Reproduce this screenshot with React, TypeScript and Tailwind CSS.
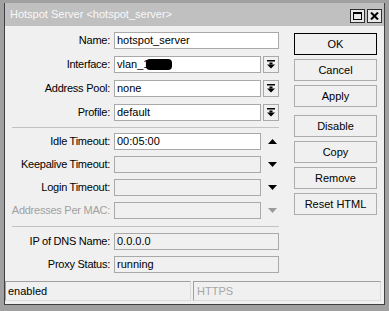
import React from "react";

const font = "font-['Liberation_Sans',Arial,sans-serif]";

const DropIcon = () => (
  <svg width="8" height="9" viewBox="0 0 8 9" aria-hidden>
    <rect x="0" y="0" width="8" height="1.5" fill="#000" />
    <rect x="2.5" y="2.5" width="3" height="2" fill="#000" />
    <polygon points="0,4.5 8,4.5 4,8.5" fill="#000" />
  </svg>
);

const Tri = ({ up, dim }: { up?: boolean; dim?: boolean }) => (
  <svg width="9" height="5" viewBox="0 0 9 5" aria-hidden>
    <polygon points={up ? "0,5 9,5 4.5,0" : "0,0 9,0 4.5,5"} fill={dim ? "#9a9a9a" : "#000"} />
  </svg>
);

const Label = ({ text, dim }: { text: string; dim?: boolean }) => (
  <div className={`w-[105px] shrink-0 text-right whitespace-nowrap tracking-[-0.25px] ${dim ? "text-[#a0a0a0]" : "text-black"}`}>{text}</div>
);

const Field = ({ value, white, width }: { value?: React.ReactNode; white?: boolean; width: string }) => (
  <div
    className={`${width} h-[17px] border border-[#a9a9a9] flex items-center pl-[2px] whitespace-nowrap overflow-hidden ${white ? "bg-white" : "bg-[#f0f0f0]"}`}
  >
    {value}
  </div>
);

const Row = ({ children }: { children: React.ReactNode }) => (
  <div className="flex items-center gap-[4px] h-[17px]">{children}</div>
);

const Btn = ({ text, primary }: { text: string; primary?: boolean }) => (
  <div
    className={`w-[83px] h-[22px] flex items-center justify-center bg-[#f0f0f0] border ${primary ? "border-black" : "border-[#adadad]"}`}
  >
    {text}
  </div>
);

export default function App() {
  return (
    <div className={`w-[389px] h-[311px] bg-[#a0a0a0] pt-[3px] pl-[4px] ${font} text-[11px] text-black`}>
      <div className="w-[381px] border-x border-b border-[#404040] bg-[#f0f0f0]">
        {/* title bar */}
        <div className="h-[23px] bg-[#c0c0c0] flex items-center justify-between pl-[5px] pr-[2px]">
          <span className="text-[#f8f8f8] text-[11px]">Hotspot Server &lt;hotspot_server&gt;</span>
          <div className="flex gap-[2px] mt-[3px]">
            <div className="w-[15px] h-[14px] border border-[#303030] bg-[#e8e8e8] flex items-center justify-center">
              <div className="w-[9px] h-[8px] border border-black border-t-2" />
            </div>
            <div className="w-[15px] h-[14px] border border-[#303030] bg-[#e8e8e8] flex items-center justify-center">
              <svg width="9" height="8" viewBox="0 0 9 8" aria-hidden>
                <path d="M1 0.5 L8 7.5 M8 0.5 L1 7.5" stroke="#000" strokeWidth="2" />
              </svg>
            </div>
          </div>
        </div>

        {/* body */}
        <div className="flex">
          <div className="pt-[6px] flex flex-col w-[274px]">
            <div className="flex flex-col gap-[7px]">
              <Row>
                <Label text="Name:" />
                <Field white width="w-[165px]" value="hotspot_server" />
              </Row>
              <Row>
                <Label text="Interface:" />
                <Field
                  white
                  width="w-[147px]"
                  value={
                    <span className="flex items-center">
                      vlan_1
                      <span className="inline-block w-[26px] h-[11px] bg-black rounded-[4px] ml-[-3px]" />
                    </span>
                  }
                />
                <div className="ml-[-2px] w-[16px] h-[17px] border border-[#a9a9a9] bg-[#f0f0f0] flex items-center justify-center">
                  <DropIcon />
                </div>
              </Row>
              <Row>
                <Label text="Address Pool:" />
                <Field white width="w-[147px]" value="none" />
                <div className="ml-[-2px] w-[16px] h-[17px] border border-[#a9a9a9] bg-[#f0f0f0] flex items-center justify-center">
                  <DropIcon />
                </div>
              </Row>
              <Row>
                <Label text="Profile:" />
                <Field white width="w-[147px]" value="default" />
                <div className="ml-[-2px] w-[16px] h-[17px] border border-[#a9a9a9] bg-[#f0f0f0] flex items-center justify-center">
                  <DropIcon />
                </div>
              </Row>
            </div>

            <div className="ml-[7px] w-[267px] h-px bg-[#c2c2c2] mt-[6px] mb-[5px]" />

            <div className="flex flex-col gap-[6px]">
              <Row>
                <Label text="Idle Timeout:" />
                <Field white width="w-[147px]" value="00:05:00" />
                <div className="w-[14px] flex justify-center"><Tri up /></div>
              </Row>
              <Row>
                <Label text="Keepalive Timeout:" />
                <Field width="w-[147px]" />
                <div className="w-[14px] flex justify-center"><Tri /></div>
              </Row>
              <Row>
                <Label text="Login Timeout:" />
                <Field width="w-[147px]" />
                <div className="w-[14px] flex justify-center"><Tri /></div>
              </Row>
              <Row>
                <Label text="Addresses Per MAC:" dim />
                <Field width="w-[147px]" />
                <div className="w-[14px] flex justify-center"><Tri dim /></div>
              </Row>
            </div>

            <div className="ml-[7px] w-[267px] h-px bg-[#c2c2c2] mt-[7px] mb-[6px]" />

            <div className="flex flex-col gap-[6px]">
              <Row>
                <Label text="IP of DNS Name:" />
                <Field width="w-[165px]" value="0.0.0.0" />
              </Row>
              <Row>
                <Label text="Proxy Status:" />
                <Field width="w-[165px]" value="running" />
              </Row>
            </div>
          </div>

          <div className="ml-[15px] pt-[7px] flex flex-col">
            <div className="flex flex-col gap-[4px]">
              <Btn text="OK" primary />
              <Btn text="Cancel" />
              <Btn text="Apply" />
            </div>
            <div className="flex flex-col gap-[4px] mt-[8px]">
              <Btn text="Disable" />
              <Btn text="Copy" />
              <Btn text="Remove" />
              <Btn text="Reset HTML" />
            </div>
          </div>
        </div>

        {/* status bar */}
        <div className="flex gap-[2px] mt-[8px] pb-[3px] pr-[2px]">
          <div className="w-[186px] h-[20px] border border-t-[#a0a0a0] border-l-[#a0a0a0] border-r-[#dcdcdc] border-b-[#dcdcdc] flex items-center pl-[2px]">
            enabled
          </div>
          <div className="w-[188px] h-[20px] border border-t-[#a0a0a0] border-l-[#a0a0a0] border-r-[#dcdcdc] border-b-[#dcdcdc] flex items-center pl-[3px] text-[#a6a6a6]">
            HTTPS
          </div>
        </div>
      </div>
    </div>
  );
}
